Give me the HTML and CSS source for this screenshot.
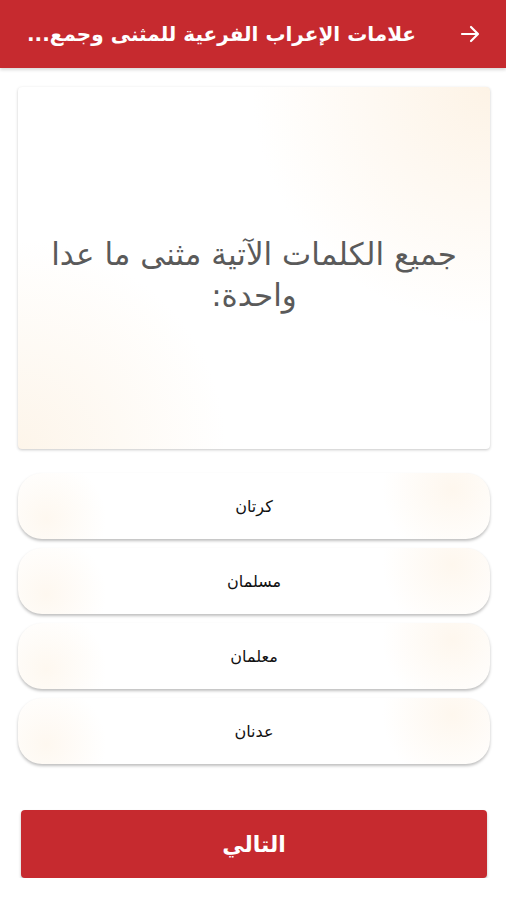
FILE: index.html
```html
<!DOCTYPE html>
<html lang="ar" dir="rtl">
<head>
  <meta charset="UTF-8" />
  <title>علامات الإعراب الفرعية</title>
  <link rel="stylesheet" href="styles.css">
</head>
<body>

<!-- Top bar -->
<header class="topbar">
  <span class="back">
    <svg width="24" height="24" viewBox="0 0 24 24"><path d="M4 12h15M13 5l7 7-7 7" fill="none" stroke="#fff" stroke-width="2.2" stroke-linecap="round" stroke-linejoin="round"/></svg>
  </span>
  <h1 class="title">علامات الإعراب الفرعية للمثنى وجمع...</h1>
</header>

<main class="content">
  <!-- Question card -->
  <div class="question">
    <p>جميع الكلمات الآتية مثنى ما عدا واحدة:</p>
  </div>

  <!-- Answers -->
  <div class="answers">
    <div class="answer">كرتان</div>
    <div class="answer">مسلمان</div>
    <div class="answer">معلمان</div>
    <div class="answer">عدنان</div>
  </div>

  <button class="next">التالي</button>
</main>

</body>
</html>
```

FILE: styles.css
```css
body {
  margin: 0;
  font-family: "DejaVu Sans", sans-serif;
  background-color: #ffffff;
  width: 506px;
}

/* Header */
.topbar {
  height: 68px;
  background-color: #c62a2f;
  display: flex;
  align-items: center;
  padding: 0 24px 0 20px;
  box-shadow: 0 2px 3px rgba(0, 0, 0, 0.15);
}
.back {
  display: flex;
  width: 24px;
  height: 24px;
  margin-left: 42px;
}
.title {
  margin: 0;
  font-size: 20px;
  font-weight: bold;
  color: #fff;
  white-space: nowrap;
}

.content {
  padding: 19px 16px 0 18px;
}

/* Question card */
.question {
  height: 362px;
  border-radius: 4px;
  background:
    radial-gradient(circle at 100% 0%, #fdf3e6 0, rgba(255,255,255,0) 40%),
    radial-gradient(circle at 0% 100%, #fdf5ea 0, rgba(255,255,255,0) 35%),
    #ffffff;
  box-shadow: 0 1px 3px rgba(0, 0, 0, 0.22);
  display: flex;
  align-items: center;
  justify-content: center;
  padding: 0 30px;
  box-sizing: border-box;
}
.question p {
  margin: 14px 0 0;
  font-size: 31px;
  line-height: 41px;
  color: #5a5a5a;
  text-align: center;
}

/* Answer pills */
.answers {
  margin-top: 24px;
  display: flex;
  flex-direction: column;
  gap: 9px;
}
.answer {
  height: 66px;
  border-radius: 24px;
  background:
    radial-gradient(circle at 92% 25%, #fef7ee 0, rgba(255,255,255,0) 70px),
    radial-gradient(circle at 6% 70%, #fef8f0 0, rgba(255,255,255,0) 60px),
    #ffffff;
  box-shadow: 0 2px 3px rgba(0, 0, 0, 0.25);
  display: flex;
  align-items: center;
  justify-content: center;
  font-size: 16px;
  color: #111;
}

/* Next button */
.next {
  display: block;
  width: 466px;
  height: 68px;
  margin: 46px 3px 0 0;
  border: none;
  border-radius: 4px;
  background-color: #c62a2f;
  color: #fff;
  font-family: "DejaVu Sans", sans-serif;
  font-size: 22px;
  font-weight: bold;
  box-shadow: 0 2px 3px rgba(0, 0, 0, 0.25);
}
```
